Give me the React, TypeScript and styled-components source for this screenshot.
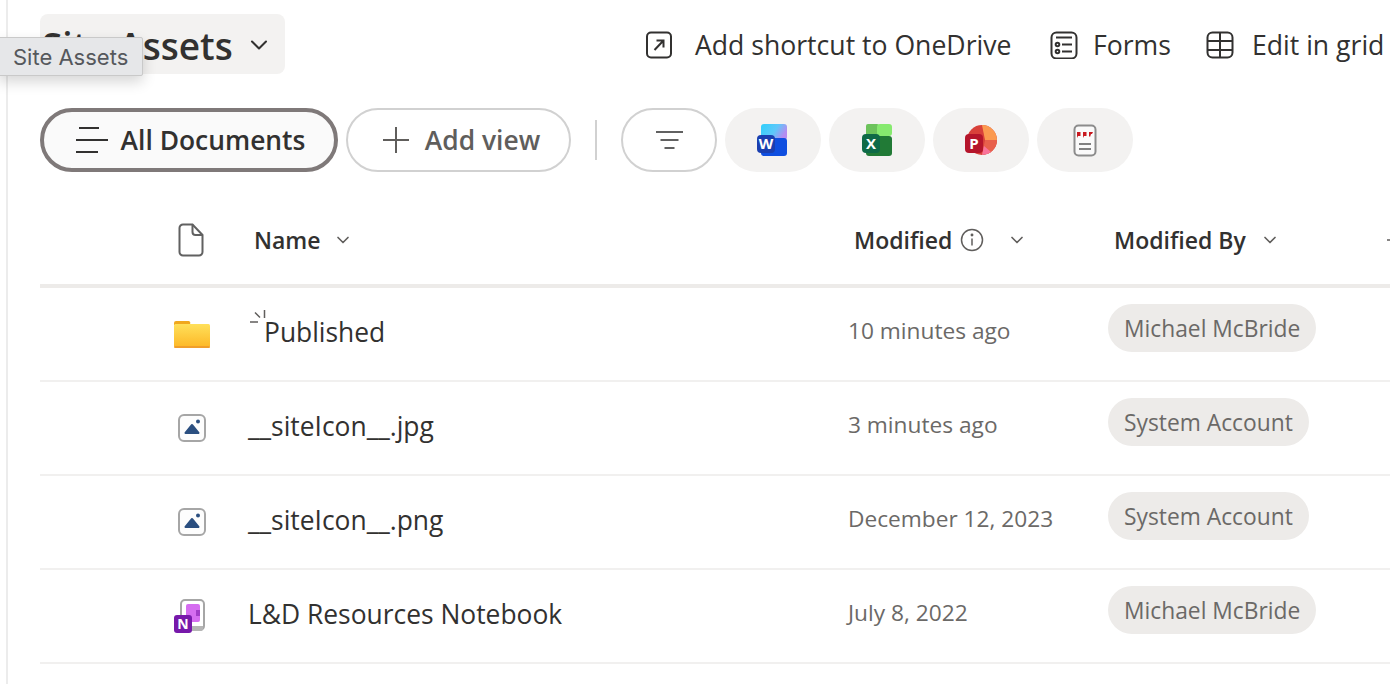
import React from 'react';
import styled, { createGlobalStyle } from 'styled-components';
import { ChevronDown } from 'lucide-react';

const GlobalStyle = createGlobalStyle`
  html, body {
    margin: 0;
    padding: 0;
    background: #fff;
    overflow: hidden;
  }
  body {
    font-family: "Open Sans", "Noto Sans", "Liberation Sans", sans-serif;
    color: #323130;
  }
`;

const Page = styled.div`
  position: relative;
  width: 1390px;
  height: 684px;
  overflow: hidden;
  box-sizing: border-box;
  padding: 14px 0 0 40px;
`;

const SideLine = styled.div`
  position: absolute;
  left: 6px;
  top: 0;
  bottom: 0;
  width: 2px;
  background: #ececec;
`;

const Tooltip = styled.div`
  position: absolute;
  left: -2px;
  top: 37px;
  height: 39px;
  width: 145px;
  box-sizing: border-box;
  padding-left: 14px;
  display: flex;
  align-items: center;
  background: #e6e7e9;
  border: 1px solid #c9c9c9;
  border-radius: 2px;
  box-shadow: 0 6px 14px rgba(0, 0, 0, 0.16);
  font-family: "Inter", "Liberation Sans", sans-serif;
  font-size: 22px;
  color: #55585c;
  white-space: nowrap;
`;

const TopBar = styled.div`
  display: flex;
  align-items: center;
  height: 60px;
`;

const TitleButton = styled.div`
  width: 245px;
  height: 60px;
  flex: none;
  box-sizing: border-box;
  padding: 2px 0 0 2px;
  display: flex;
  align-items: center;
  gap: 12px;
  background: #f3f2f1;
  border-radius: 8px;
  font-size: 37px;
  font-weight: 600;
  color: #323130;
  white-space: nowrap;
`;

const Actions = styled.div`
  display: flex;
  align-items: center;
  margin-left: 360px;
  margin-top: 2px;
  white-space: nowrap;
`;

const ActionItem = styled.div<{ $gap: number; $width: number }>`
  display: flex;
  align-items: center;
  gap: ${(p) => p.$gap}px;
  width: ${(p) => p.$width}px;
  flex: none;
  font-size: 26.6px;
  color: #323130;
`;

const ViewBar = styled.div`
  display: flex;
  align-items: center;
  margin-top: 34px;
  height: 64px;
`;

const Pill = styled.div<{ $active?: boolean; $width: number; $shift?: number }>`
  box-sizing: border-box;
  width: ${(p) => p.$width}px;
  height: 64px;
  padding-left: ${(p) => p.$shift ?? 0}px;
  display: flex;
  align-items: center;
  justify-content: center;
  gap: ${(p) => (p.$active ? 13 : 15)}px;
  flex: none;
  border-radius: 32px;
  border: ${(p) => (p.$active ? '4px solid #7f7979' : '2px solid #d1d1d1')};
  background: ${(p) => (p.$active ? '#fafafa' : '#fff')};
  font-size: 26.4px;
  font-weight: 600;
  color: ${(p) => (p.$active ? '#323130' : '#605e5c')};
`;

const AddViewPill = styled(Pill)`
  margin-left: 8px;
`;

const Divider = styled.div`
  width: 2px;
  height: 40px;
  margin: 0 24px;
  flex: none;
  background: #d1d1d1;
`;

const AppButton = styled.div`
  width: 96px;
  height: 64px;
  margin-left: 8px;
  flex: none;
  border-radius: 32px;
  background: #f3f2f1;
  display: flex;
  align-items: center;
  justify-content: center;
`;

const Table = styled.div`
  margin-top: 28px;
`;

const HeaderRow = styled.div`
  display: grid;
  grid-template-columns: 214px 600px 260px 272px 1fr;
  height: 84px;
  align-items: center;
  border-bottom: 4px solid #edebe9;
  font-size: 23px;
  font-weight: 600;
  color: #323130;
`;

const HeaderCell = styled.div<{ $gap: number }>`
  display: flex;
  align-items: center;
  gap: ${(p) => p.$gap}px;
  white-space: nowrap;
  margin-top: -4px;
`;

const HeaderIconCell = styled.div`
  padding-left: 138px;
  display: flex;
  align-items: center;
  margin-top: -4px;
`;

const Row = styled.div`
  display: grid;
  grid-template-columns: 208px 600px 260px 1fr;
  height: 94px;
  box-sizing: border-box;
  padding-bottom: 12px;
  align-items: center;
  border-bottom: 2px solid #f1f0ef;
`;

const IconCell = styled.div<{ $left: number }>`
  padding-left: ${(p) => p.$left}px;
  margin-top: 12px;
  display: flex;
  align-items: center;
`;

const NameCell = styled.div<{ $shimmer?: boolean }>`
  position: relative;
  margin-top: 8px;
  font-size: 26.4px;
  color: #323130;
  white-space: nowrap;
  padding-left: ${(p) => (p.$shimmer ? '16px' : '0')};
`;

const NewMark = styled.svg`
  position: absolute;
  left: 1px;
  top: -5px;
`;

const DateCell = styled.div`
  margin-top: 4px;
  font-size: 22.7px;
  color: #6b6967;
  white-space: nowrap;
`;

const Chip = styled.div`
  display: inline-flex;
  align-items: center;
  height: 48px;
  padding: 0 16px;
  border-radius: 24px;
  background: #edebe9;
  font-size: 22.8px;
  color: #6b6967;
  white-space: nowrap;
  justify-self: start;
`;

const ShortcutIcon = () => (
  <svg width="28" height="28" viewBox="0 0 28 28" fill="none" stroke="#323130" strokeWidth="2">
    <rect x="2" y="1.5" width="24" height="25" rx="4" />
    <path d="M9.5 19 18.5 9.5M11.5 9.5h7v7" />
  </svg>
);

const FormsIcon = () => (
  <svg width="28" height="28" viewBox="0 0 28 28" fill="none" stroke="#323130" strokeWidth="2">
    <rect x="1.5" y="1.5" width="25" height="26" rx="5" />
    <path d="M6 6.5h16M12 13.5h10M12 20.5h10" />
    <circle cx="7.5" cy="13.5" r="1.8" />
    <circle cx="7.5" cy="20.5" r="1.8" />
  </svg>
);

const GridIcon = () => (
  <svg width="28" height="28" viewBox="0 0 28 28" fill="none" stroke="#323130" strokeWidth="2">
    <rect x="1.5" y="1.5" width="25" height="25" rx="5" />
    <path d="M1.5 10h25M1.5 19h25M14 1.5v25" />
  </svg>
);

const ViewIcon = () => (
  <svg width="32" height="28" viewBox="0 0 32 28" fill="none" stroke="#323130" strokeWidth="2">
    <path d="M3 2h20M0 14h32M0 26h22" />
  </svg>
);

const AddIcon = () => (
  <svg width="28" height="28" viewBox="0 0 28 28" fill="none" stroke="#605e5c" strokeWidth="2">
    <path d="M14 1v26M1 14h26" />
  </svg>
);

const AddColumnIcon = () => (
  <svg width="18" height="18" viewBox="0 0 18 18" fill="none" stroke="#605e5c" strokeWidth="1.5">
    <path d="M9 1v16M1 9h16" />
  </svg>
);

const FilterIcon = () => (
  <svg width="30" height="20" viewBox="0 0 30 20" fill="none" stroke="#616161" strokeWidth="2">
    <path d="M2 2h27M6.500 10h18M10.500 18h10" />
  </svg>
);

const WordIcon = () => (
  <svg width="32" height="33" viewBox="0 0 32 33">
    <defs>
      <linearGradient id="wordTop" x1="0" y1="0" x2="1" y2="0.4">
        <stop offset="0" stopColor="#2fd0fb" />
        <stop offset="0.6" stopColor="#5ec8fa" />
        <stop offset="1" stopColor="#b58cf0" />
      </linearGradient>
    </defs>
    <rect x="4" y="0" width="26" height="16" rx="3" fill="url(#wordTop)" />
    <rect x="4" y="14" width="26" height="18" rx="3" fill="#0f4fe0" />
    <rect x="0" y="11" width="18" height="18" rx="4" fill="#1a3fb0" />
    <text x="9" y="25" textAnchor="middle" fontSize="15" fontWeight="700" fontFamily="Open Sans, sans-serif" fill="#fff">W</text>
  </svg>
);

const ExcelIcon = () => (
  <svg width="30" height="33" viewBox="0 0 30 33">
    <rect x="4" y="0" width="13" height="14" rx="2" fill="#6cc35c" />
    <rect x="15" y="0" width="15" height="12" rx="3" fill="#86ea6f" />
    <rect x="4" y="12" width="26" height="20" rx="3" fill="#217a36" />
    <rect x="0" y="10" width="18" height="19" rx="4" fill="#0e6a47" />
    <text x="9" y="25" textAnchor="middle" fontSize="15" fontWeight="700" fontFamily="Open Sans, sans-serif" fill="#fff">X</text>
  </svg>
);

const PowerPointIcon = () => (
  <svg width="32" height="33" viewBox="0 0 32 33">
    <circle cx="17" cy="16" r="15" fill="#d8413a" />
    <path d="M17 1a15 15 0 0 1 15 15H20Z" fill="#fb9a50" />
    <path d="M20 16h12a15 15 0 0 1-15 15Z" fill="#e8604c" />
    <path d="M17 31a15 15 0 0 0 9-3l-7-6Z" fill="#f9739a" />
    <rect x="0" y="10" width="18" height="19" rx="4" fill="#b5152b" />
    <text x="9" y="25" textAnchor="middle" fontSize="15" fontWeight="700" fontFamily="Open Sans, sans-serif" fill="#fff">P</text>
  </svg>
);

const PdfIcon = () => (
  <svg width="24" height="33" viewBox="0 0 24 33" fill="none">
    <rect x="1.500" y="1.500" width="21" height="30" rx="4" fill="#fafafa" stroke="#8c8c8c" strokeWidth="2" />
    <path d="M4 8h3.500v4H5l-1 2ZM10 8h3.500v4H11l-1 2ZM16 8h4l-1 2h-1l-1 3-1-1Z" fill="#c8191f" />
    <path d="M6 20h12M6 25h12" stroke="#808080" strokeWidth="2" />
  </svg>
);

const FileIcon = () => (
  <svg width="26" height="34" viewBox="0 0 26 34" fill="none" stroke="#616161" strokeWidth="2">
    <path d="M5 1.500h9.500L24.500 12v17a3.500 3.500 0 0 1-3.500 3.500H5A3.500 3.500 0 0 1 1.500 29V5A3.500 3.500 0 0 1 5 1.500Z" />
    <path d="M14.500 1.500V9a3 3 0 0 0 3 3h7" />
  </svg>
);

const InfoIcon = () => (
  <svg width="24" height="24" viewBox="0 0 24 24" fill="none" stroke="#605e5c" strokeWidth="1.500">
    <circle cx="12" cy="12" r="10.500" />
    <path d="M12 10.500v7" />
    <circle cx="12" cy="7" r="0.700" fill="#605e5c" />
  </svg>
);

const FolderIcon = () => (
  <svg width="36" height="27" viewBox="0 0 36 27">
    <defs>
      <linearGradient id="folderFill" x1="0" y1="0" x2="0" y2="1">
        <stop offset="0" stopColor="#ffe05a" />
        <stop offset="1" stopColor="#fdb827" />
      </linearGradient>
    </defs>
    <path d="M0 2a2 2 0 0 1 2-2h12a2 2 0 0 1 2 3l-1 1H0Z" fill="#f0a81e" />
    <rect x="0" y="3" width="36" height="23" rx="1.500" fill="url(#folderFill)" />
    <rect x="0" y="25" width="36" height="2" rx="1" fill="#f09e2a" />
  </svg>
);

const ImageIcon = () => (
  <svg width="28" height="28" viewBox="0 0 28 28">
    <rect x="1" y="1" width="26" height="26" rx="5" fill="#fdfdfd" stroke="#a6a6a6" strokeWidth="2" />
    <path d="M14 11 20.500 19H7.500Z" fill="#2b4f80" stroke="#2b4f80" strokeWidth="2" strokeLinejoin="round" />
    <circle cx="20" cy="7.500" r="2" fill="#2b4f80" />
  </svg>
);

const NotebookIcon = () => (
  <svg width="34" height="34" viewBox="0 0 34 34">
    <rect x="7" y="1" width="23" height="30" rx="4" fill="#fff" stroke="#a6a6a6" strokeWidth="2" />
    <path d="M8 27h21v3a2 2 0 0 1-2 2H10a2 2 0 0 1-2-2Z" fill="#b5b5b5" />
    <rect x="12" y="5" width="14" height="18" rx="2" fill="#d56df0" />
    <rect x="22" y="11" width="4" height="6" fill="#a23cc8" />
    <rect x="0" y="16" width="18" height="18" rx="3" fill="#7719aa" />
    <text x="9" y="30" textAnchor="middle" fontSize="14" fontWeight="700" fontFamily="Open Sans, sans-serif" fill="#fff">N</text>
  </svg>
);

const rows = [
  { name: 'Published', modified: '10 minutes ago', by: 'Michael McBride', icon: <FolderIcon />, left: 134, isNew: true },
  { name: '__siteIcon__.jpg', modified: '3 minutes ago', by: 'System Account', icon: <ImageIcon />, left: 138 },
  { name: '__siteIcon__.png', modified: 'December 12, 2023', by: 'System Account', icon: <ImageIcon />, left: 138 },
  { name: 'L&D Resources Notebook', modified: 'July 8, 2022', by: 'Michael McBride', icon: <NotebookIcon />, left: 134 },
];

const App = () => {
  return (
    <Page>
      <GlobalStyle />
      <SideLine />
      <TopBar>
        <TitleButton>
          Site Assets
          <ChevronDown size={28} strokeWidth={1.75} color="#323130" />
        </TitleButton>
        <Actions>
          <ActionItem $gap={22} $width={405}>
            <ShortcutIcon />
            Add shortcut to OneDrive
          </ActionItem>
          <ActionItem $gap={15} $width={156}>
            <FormsIcon />
            Forms
          </ActionItem>
          <ActionItem $gap={18} $width={200}>
            <GridIcon />
            Edit in grid
          </ActionItem>
        </Actions>
      </TopBar>
      <ViewBar>
        <Pill $active $width={298} $shift={3}>
          <ViewIcon />
          All Documents
        </Pill>
        <AddViewPill $width={225} $shift={5}>
          <AddIcon />
          Add view
        </AddViewPill>
        <Divider />
        <Pill $width={96}>
          <FilterIcon />
        </Pill>
        <AppButton><WordIcon /></AppButton>
        <AppButton><ExcelIcon /></AppButton>
        <AppButton><PowerPointIcon /></AppButton>
        <AppButton><PdfIcon /></AppButton>
      </ViewBar>
      <Table>
        <HeaderRow>
          <HeaderIconCell><FileIcon /></HeaderIconCell>
          <HeaderCell $gap={12}>
            Name
            <ChevronDown size={20} strokeWidth={2} color="#605e5c" />
          </HeaderCell>
          <HeaderCell $gap={8}>
            Modified
            <InfoIcon />
            <ChevronDown size={20} strokeWidth={2} color="#605e5c" style={{ marginLeft: 15 }} />
          </HeaderCell>
          <HeaderCell $gap={14}>
            Modified By
            <ChevronDown size={20} strokeWidth={2} color="#605e5c" />
          </HeaderCell>
          <HeaderCell $gap={0}>
            <AddColumnIcon />
          </HeaderCell>
        </HeaderRow>
        {rows.map((row) => (
          <Row key={row.name}>
            <IconCell $left={row.left}>{row.icon}</IconCell>
            <NameCell $shimmer={row.isNew}>
              {row.isNew && (
                <NewMark width="18" height="18" viewBox="0 0 18 18" fill="none" stroke="#605e5c" strokeWidth="1.500">
                  <path d="M15.500 1v8M6 3.500l5 5M1 13h8" />
                </NewMark>
              )}
              {row.name}
            </NameCell>
            <DateCell>{row.modified}</DateCell>
            <Chip>{row.by}</Chip>
          </Row>
        ))}
      </Table>
      <Tooltip>Site Assets</Tooltip>
    </Page>
  );
};

export default App;
